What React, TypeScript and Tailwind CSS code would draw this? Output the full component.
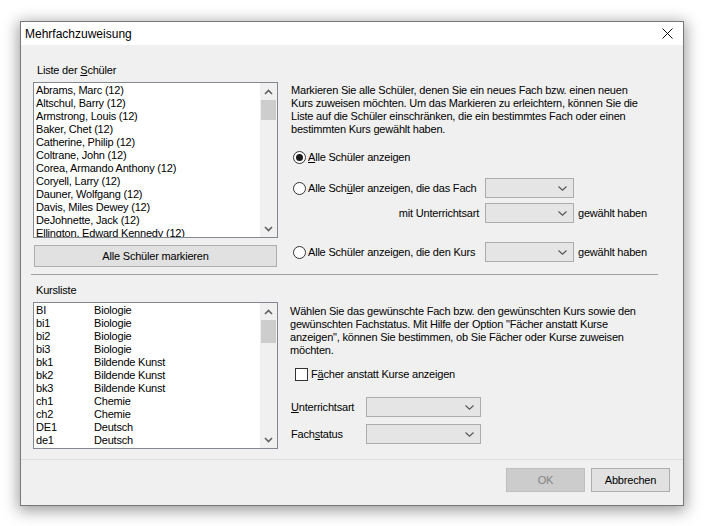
import type { ReactNode } from 'react';

const students = [
  'Abrams, Marc (12)',
  'Altschul, Barry (12)',
  'Armstrong, Louis (12)',
  'Baker, Chet (12)',
  'Catherine, Philip (12)',
  'Coltrane, John (12)',
  'Corea, Armando Anthony (12)',
  'Coryell, Larry (12)',
  'Dauner, Wolfgang (12)',
  'Davis, Miles Dewey (12)',
  'DeJohnette, Jack (12)',
  'Ellington, Edward Kennedy (12)',
];

const courses: [string, string][] = [
  ['BI', 'Biologie'],
  ['bi1', 'Biologie'],
  ['bi2', 'Biologie'],
  ['bi3', 'Biologie'],
  ['bk1', 'Bildende Kunst'],
  ['bk2', 'Bildende Kunst'],
  ['bk3', 'Bildende Kunst'],
  ['ch1', 'Chemie'],
  ['ch2', 'Chemie'],
  ['DE1', 'Deutsch'],
  ['de1', 'Deutsch'],
];

function ScrollArrow({ down }: { down?: boolean }) {
  return (
    <div className="h-[17px] flex items-center justify-center">
      <svg width="9" height="6" viewBox="0 0 9 6" className={down ? 'rotate-180' : ''}>
        <path d="M1 5 L4.5 1.5 L8 5" fill="none" stroke="#606060" strokeWidth="1.6" />
      </svg>
    </div>
  );
}

function ListBox({ height, thumb, children }: { height: string; thumb: string; children: ReactNode }) {
  return (
    <div className={`${height} border border-[#828790] bg-white flex`}>
      <div className="flex-1 overflow-hidden pt-px pl-[2px] leading-[13px]">{children}</div>
      <div className="w-[17px] bg-[#f0f0f0] flex flex-col">
        <ScrollArrow />
        <div className={`${thumb} mx-px bg-[#cdcdcd]`} />
        <div className="flex-1" />
        <ScrollArrow down />
      </div>
    </div>
  );
}

function Combo({ width }: { width: string }) {
  return (
    <div className={`${width} h-[20px] border border-[#adadad] bg-[#e5e5e5] flex items-center justify-end pr-[6px]`}>
      <svg width="9" height="5" viewBox="0 0 9 5">
        <path d="M0.5 0.5 L4.5 4.2 L8.5 0.5" fill="none" stroke="#555" strokeWidth="1.1" />
      </svg>
    </div>
  );
}

function Radio({ checked, children }: { checked?: boolean; children: ReactNode }) {
  return (
    <div className="flex items-center">
      <div className="ml-[3px] w-[13px] h-[13px] rounded-full border border-[#333] bg-white flex items-center justify-center">
        {checked && <div className="w-[7px] h-[7px] rounded-full bg-[#1a1a1a]" />}
      </div>
      <span className="ml-[2px]">{children}</span>
    </div>
  );
}

function WinButton({ children, disabled, className = '' }: { children: ReactNode; disabled?: boolean; className?: string }) {
  return (
    <div
      className={`flex items-center justify-center border ${
        disabled ? 'bg-[#cccccc] border-[#bfbfbf] text-[#838383]' : 'bg-[#e1e1e1] border-[#adadad] text-black'
      } ${className}`}
    >
      {children}
    </div>
  );
}

export default function App() {
  return (
    <div className="min-h-screen bg-white pl-[20px] pt-[21px] font-['Liberation_Sans',Arial,sans-serif] text-[11px] tracking-[-0.2px] text-black">
      <div className="w-[664px] h-[485px] border border-[#777] bg-[#f0f0f0] shadow-[0_3px_14px_2px_rgba(0,0,0,0.38)] flex flex-col">
        <div className="h-[23px] bg-white flex items-center justify-between pl-[4px] pr-[10px]">
          <span className="text-[12px] tracking-normal">Mehrfachzuweisung</span>
          <svg width="11" height="11" viewBox="0 0 11 11">
            <path d="M0.5 0.5 L10.5 10.5 M10.5 0.5 L0.5 10.5" stroke="#111" strokeWidth="1" />
          </svg>
        </div>

        <div className="flex flex-col pt-[19px]">
          <div className="flex items-start">
            <div className="ml-[12px] w-[245px] flex flex-col">
              <div className="h-[13px] leading-[13px] pl-[4px] mb-[5px]">
                Liste der <span className="underline">S</span>chüler
              </div>
              <ListBox height="h-[156px]" thumb="h-[20px]">
                {students.map((s) => (
                  <div key={s} className="h-[13px] whitespace-nowrap">{s}</div>
                ))}
              </ListBox>
              <WinButton className="mt-[7px] ml-px w-[243px] h-[22px]">Alle Schüler markieren</WinButton>
            </div>

            <div className="ml-[12px] pt-[20px] flex flex-col">
              <div className="pl-px leading-[13px] whitespace-nowrap">
                <div>Markieren Sie alle Schüler, denen Sie ein neues Fach bzw. einen neuen</div>
                <div>Kurs zuweisen möchten. Um das Markieren zu erleichtern, können Sie die</div>
                <div>Liste auf die Schüler einschränken, die ein bestimmtes Fach oder einen</div>
                <div>bestimmten Kurs gewählt haben.</div>
              </div>
              <div className="mt-[11px] h-[20px] flex items-center">
                <Radio checked>
                  <span className="underline">A</span>lle Schüler anzeigen
                </Radio>
              </div>
              <div className="mt-[11px] h-[20px] flex items-center">
                <div className="w-[195px]">
                  <Radio>
                    Alle Sch<span className="underline">ü</span>ler anzeigen, die das Fach
                  </Radio>
                </div>
                <Combo width="w-[89px]" />
              </div>
              <div className="mt-[5px] h-[20px] flex items-center">
                <div className="w-[195px] text-right pr-[6px]">mit Unterrichtsart</div>
                <Combo width="w-[89px]" />
                <span className="ml-[4px]">gewählt haben</span>
              </div>
              <div className="mt-[19px] h-[20px] flex items-center">
                <div className="w-[195px]">
                  <Radio>Alle Schüler anzeigen, die den Kurs</Radio>
                </div>
                <Combo width="w-[89px]" />
                <span className="ml-[4px]">gewählt haben</span>
              </div>
            </div>
          </div>

          <div className="mt-[7px] ml-[10px] w-[627px] h-px bg-[#a0a0a0]" />

          <div className="flex items-start">
            <div className="ml-[12px] w-[245px] flex flex-col">
              <div className="mt-[9px] h-[13px] leading-[13px] pl-[3px] mb-[5px]">Kursliste</div>
              <ListBox height="h-[147px]" thumb="h-[23px]">
                {courses.map(([code, name]) => (
                  <div key={code} className="h-[13px] flex whitespace-nowrap">
                    <span className="w-[58px]">{code}</span>
                    <span>{name}</span>
                  </div>
                ))}
              </ListBox>
            </div>

            <div className="ml-[12px] pt-[30px] flex flex-col">
              <div className="leading-[13px] whitespace-nowrap">
                <div>Wählen Sie das gewünschte Fach bzw. den gewünschten Kurs sowie den</div>
                <div>gewünschten Fachstatus. Mit Hilfe der Option "Fächer anstatt Kurse</div>
                <div>anzeigen", können Sie bestimmen, ob Sie Fächer oder Kurse zuweisen</div>
                <div>möchten.</div>
              </div>
              <div className="mt-[11px] h-[13px] flex items-center">
                <div className="ml-[5px] w-[13px] h-[13px] border border-[#333] bg-white" />
                <span className="ml-[3px]">
                  F<span className="underline">ä</span>cher anstatt Kurse anzeigen
                </span>
              </div>
              <div className="mt-[16px] h-[20px] flex items-center">
                <div className="w-[76px] pl-px">
                  <span className="underline">U</span>nterrichtsart
                </div>
                <Combo width="w-[115px]" />
              </div>
              <div className="mt-[7px] h-[20px] flex items-center">
                <div className="w-[76px] pl-px">
                  Fach<span className="underline">s</span>tatus
                </div>
                <Combo width="w-[115px]" />
              </div>
            </div>
          </div>

          <div className="mt-[10px] h-px bg-[#dfdfdf]" />

          <div className="mt-[8px] flex justify-end gap-[6px] pr-[13px]">
            <WinButton disabled className="w-[79px] h-[24px]">OK</WinButton>
            <WinButton className="w-[79px] h-[24px]">Abbrechen</WinButton>
          </div>
        </div>
      </div>
    </div>
  );
}
